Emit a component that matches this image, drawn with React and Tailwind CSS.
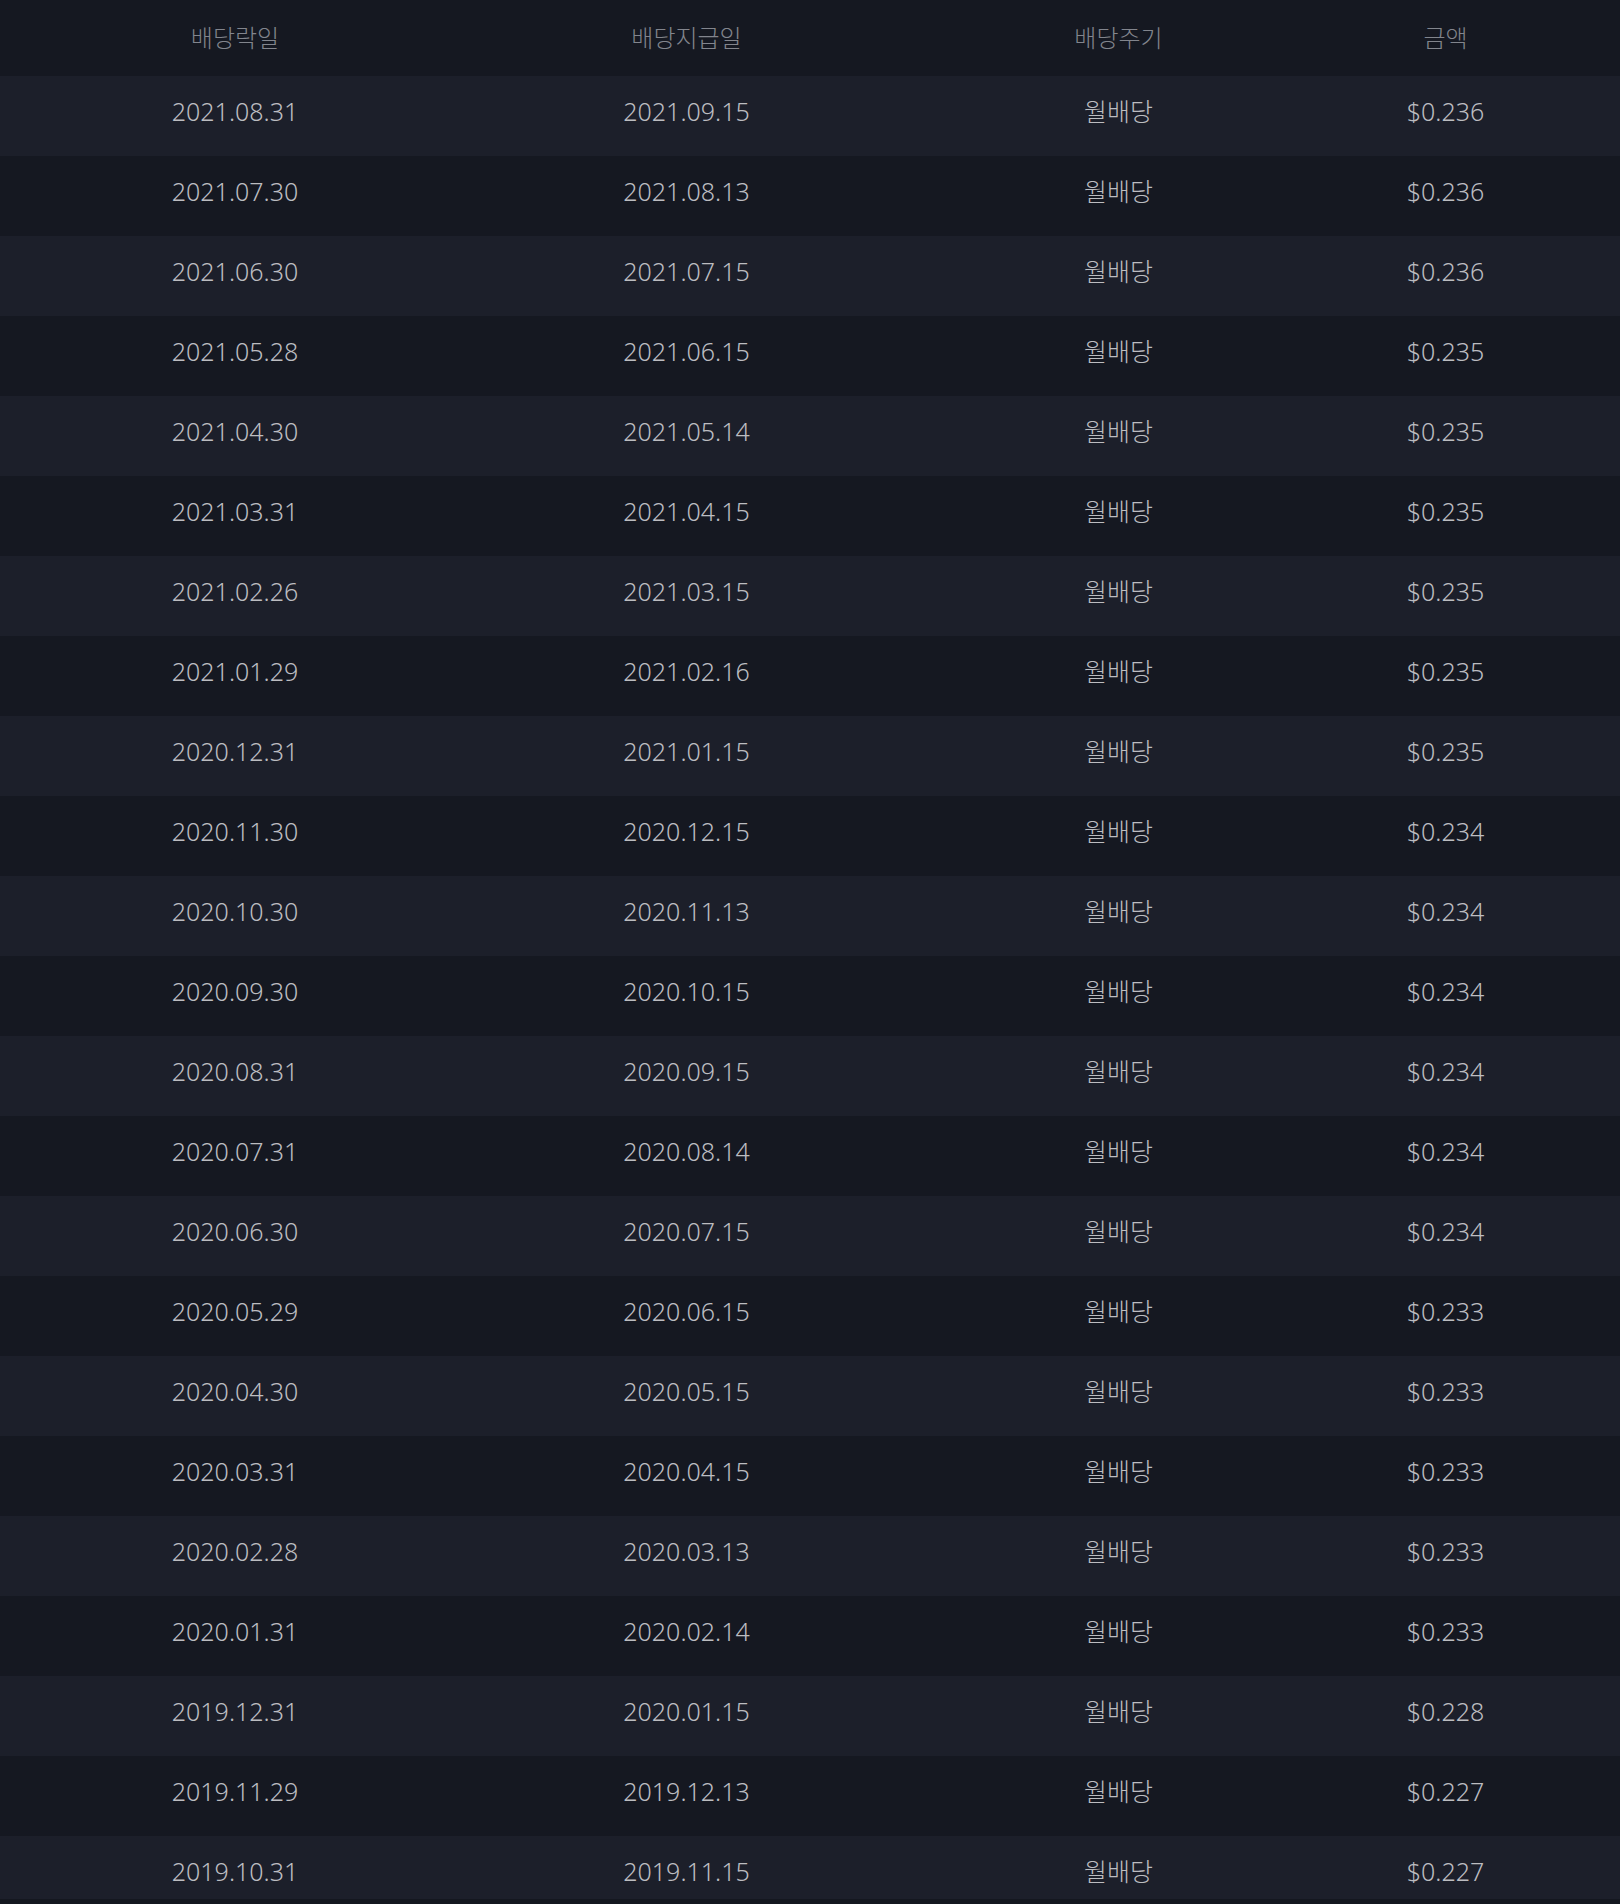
const ROWS = [
  ['2021.08.31', '2021.09.15', '$0.236'],
  ['2021.07.30', '2021.08.13', '$0.236'],
  ['2021.06.30', '2021.07.15', '$0.236'],
  ['2021.05.28', '2021.06.15', '$0.235'],
  ['2021.04.30', '2021.05.14', '$0.235'],
  ['2021.03.31', '2021.04.15', '$0.235'],
  ['2021.02.26', '2021.03.15', '$0.235'],
  ['2021.01.29', '2021.02.16', '$0.235'],
  ['2020.12.31', '2021.01.15', '$0.235'],
  ['2020.11.30', '2020.12.15', '$0.234'],
  ['2020.10.30', '2020.11.13', '$0.234'],
  ['2020.09.30', '2020.10.15', '$0.234'],
  ['2020.08.31', '2020.09.15', '$0.234'],
  ['2020.07.31', '2020.08.14', '$0.234'],
  ['2020.06.30', '2020.07.15', '$0.234'],
  ['2020.05.29', '2020.06.15', '$0.233'],
  ['2020.04.30', '2020.05.15', '$0.233'],
  ['2020.03.31', '2020.04.15', '$0.233'],
  ['2020.02.28', '2020.03.13', '$0.233'],
  ['2020.01.31', '2020.02.14', '$0.233'],
  ['2019.12.31', '2020.01.15', '$0.228'],
  ['2019.11.29', '2019.12.13', '$0.227'],
  ['2019.10.31', '2019.11.15', '$0.227'],
]

const GRID = 'grid grid-cols-[470px_433px_431px_223px] items-center text-center'

export default function App() {
  return (
    <div className="min-h-[1904px] w-[1620px] bg-[#14171f] font-['Noto_Sans','Noto_Sans_CJK_KR',sans-serif] font-light">
      <div className="h-[1899px] overflow-hidden">
        <div className={`${GRID} h-[76px] bg-[#151821] text-[24px] text-[#82858d]`}>
          <div>배당락일</div>
          <div>배당지급일</div>
          <div>배당주기</div>
          <div>금액</div>
        </div>
        {ROWS.map(([ex, pay, amt], i) => (
          <div
            key={ex}
            className={`${GRID} h-[80px] pb-[9px] text-[25px] text-[#bcbdc1] ${
              i % 2 === 0 ? 'bg-[#1c1f2a]' : 'bg-[#151821]'
            }`}
          >
            <div>{ex}</div>
            <div>{pay}</div>
            <div>월배당</div>
            <div>{amt}</div>
          </div>
        ))}
      </div>
    </div>
  )
}
